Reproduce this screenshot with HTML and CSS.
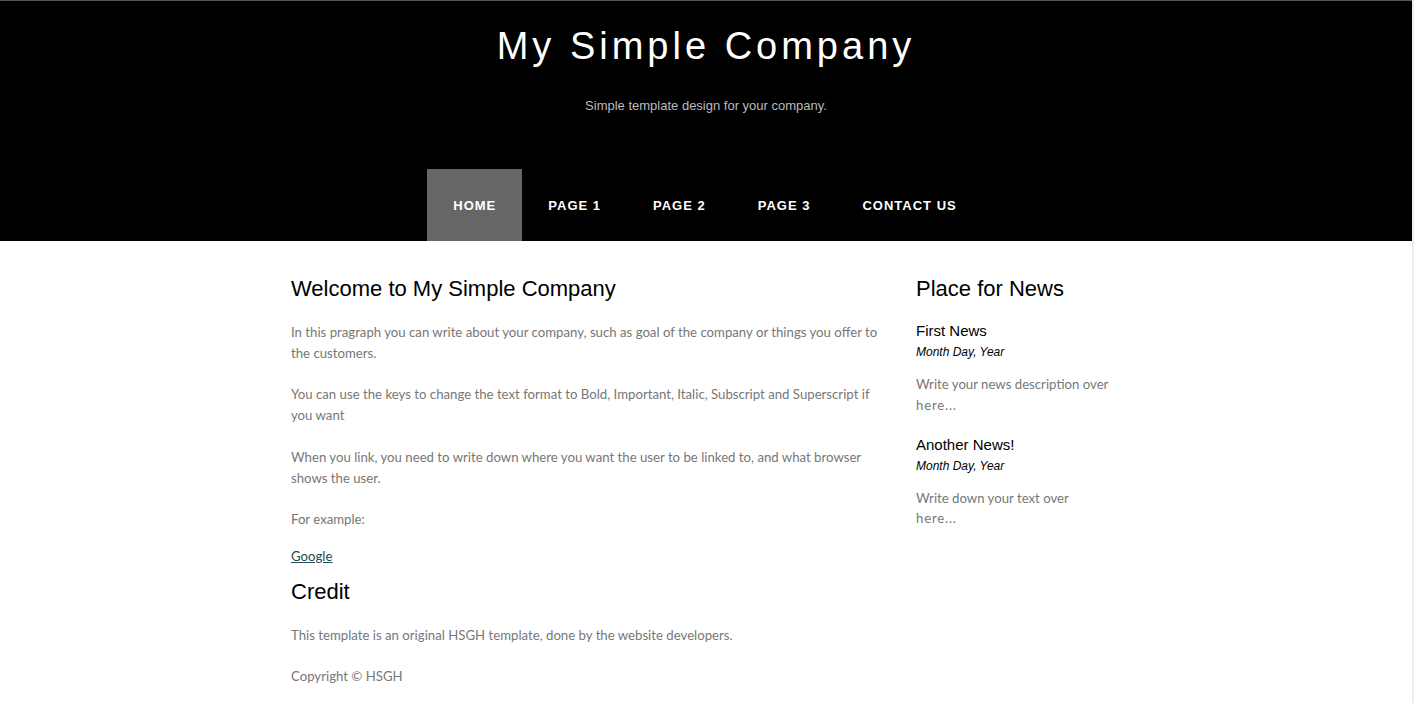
FILE: index.html
```html
<!DOCTYPE html>
<html lang="en">
<head>
<meta charset="utf-8">
<title>My Simple Company</title>
<link rel="stylesheet" href="styles.css">
</head>
<body>
<header class="site-header">
  <h1 class="site-title">My Simple Company</h1>
  <p class="tagline">Simple template design for your company.</p>
  <nav class="main-nav">
    <a class="nav-link active" href="#">HOME</a>
    <a class="nav-link" href="#">PAGE 1</a>
    <a class="nav-link" href="#">PAGE 2</a>
    <a class="nav-link" href="#">PAGE 3</a>
    <a class="nav-link" href="#">CONTACT US</a>
  </nav>
</header>
<div class="container">
  <main class="main-col">
    <h2 class="heading">Welcome to My Simple Company</h2>
    <p class="text">In this pragraph you can write about your company, such as goal of the company or things you offer to the customers.</p>
    <p class="text">You can use the keys to change the text format to Bold, Important, Italic, Subscript and Superscript if you want</p>
    <p class="text">When you link, you need to write down where you want the user to be linked to, and what browser shows the user.</p>
    <p class="text">For example:</p>
    <div class="link-line"><a class="link" href="#">Google</a></div>
    <h2 class="heading credit">Credit</h2>
    <p class="text">This template is an original HSGH template, done by the website developers.</p>
    <p class="text">Copyright &copy; HSGH</p>
  </main>
  <aside class="sidebar">
    <h2 class="heading">Place for News</h2>
    <div class="news">
      <h3 class="news-title">First News</h3>
      <div class="news-date">Month Day, Year</div>
      <p class="text news-text">Write your news description over <span class="more">here...</span></p>
    </div>
    <div class="news">
      <h3 class="news-title">Another News!</h3>
      <div class="news-date">Month Day, Year</div>
      <p class="text news-text">Write down your text over <span class="more">here...</span></p>
    </div>
  </aside>
</div>
</body>
</html>
```
FILE: styles.css
```css
html {
  background: #ececec;
}
body {
  margin: 0 2px 0 0;
  background: #fff;
  min-height: 100vh;
  font-family: "Liberation Sans", Arial, sans-serif;
}
.site-header {
  background: #000;
  border-top: 1px solid #555;
  display: flex;
  flex-direction: column;
  align-items: center;
  padding-top: 23px;
}
.site-title {
  margin: 0;
  font-size: 38px;
  line-height: 44px;
  font-weight: normal;
  letter-spacing: 4px;
  color: #fff;
  font-family: "Liberation Sans", Arial, sans-serif;
}
.tagline {
  margin: 30px 0 0;
  font-size: 13px;
  line-height: 15px;
  color: #bbb;
}
.main-nav {
  display: flex;
  margin-top: 56px;
  margin-right: 2px;
}
.nav-link {
  display: block;
  padding: 1px 26px 0;
  line-height: 71px;
  font-size: 13px;
  font-weight: bold;
  letter-spacing: 1px;
  color: #fff;
  text-decoration: none;
}
.nav-link.active {
  background: #666;
}
.container {
  width: 830px;
  margin: 0 auto;
  display: flex;
  gap: 25px;
  padding-top: 35px;
}
.main-col {
  width: 600px;
}
.sidebar {
  width: 195px;
}
.heading {
  margin: 0 0 21px;
  font-size: 22px;
  line-height: 25px;
  font-weight: normal;
  color: #000;
}
.text {
  margin: 0 0 20.8px;
  font-family: "Lato", "Trebuchet MS", sans-serif;
  font-size: 13.2px;
  line-height: 20.8px;
  color: #777;
}
.more {
  letter-spacing: 0.8px;
}
.link-line {
  margin-top: -2px;
  font-family: "Lato", "Trebuchet MS", sans-serif;
  font-size: 13.2px;
  line-height: 15px;
}
.link {
  color: #1f4a57;
}
.heading.credit {
  margin-top: 15px;
}
.news-title {
  margin: 0;
  font-size: 15px;
  line-height: 18px;
  font-weight: normal;
  color: #000;
}
.news-date {
  margin-top: 5px;
  font-size: 12px;
  line-height: 14px;
  font-style: italic;
  color: #000;
}
.news-text {
  margin: 15px 0 20px;
}
```
